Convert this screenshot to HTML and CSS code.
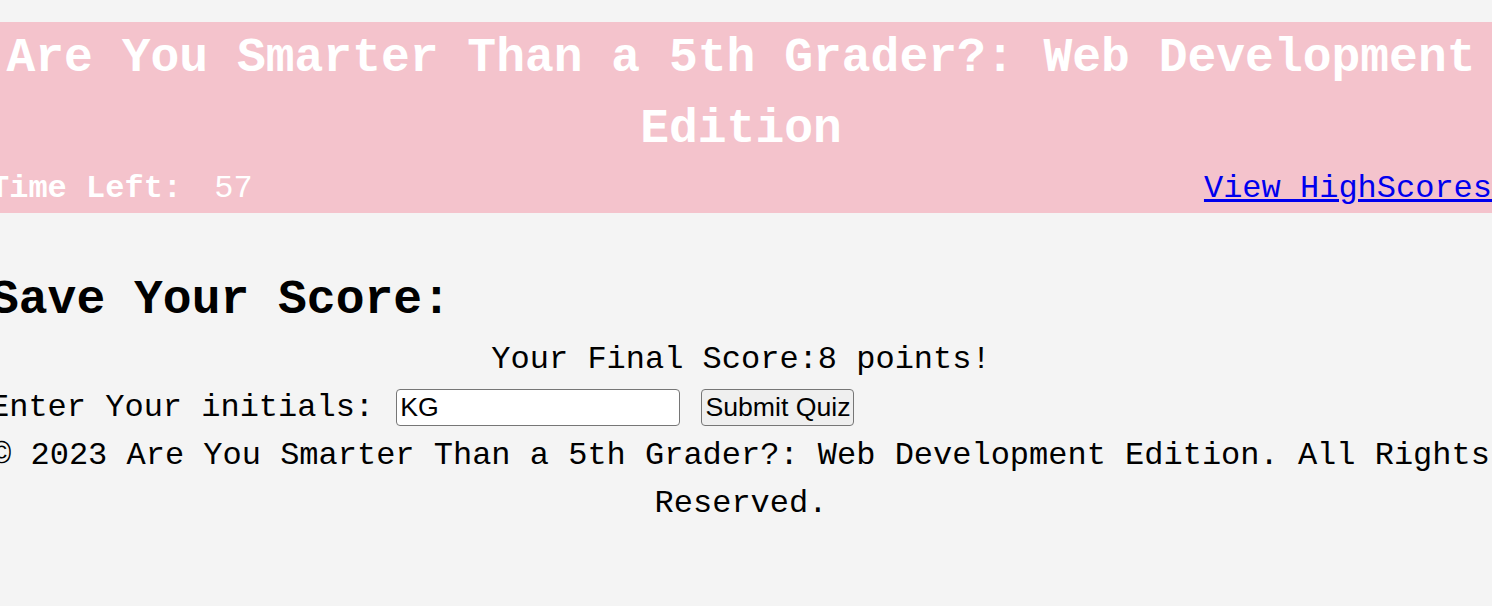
FILE: index.html
```html
<!DOCTYPE html>
<html lang="en">
<head>
<meta charset="utf-8">
<title>Are You Smarter Than a 5th Grader?: Web Development Edition</title>
<link rel="stylesheet" href="styles.css">
</head>
<body>
<div class="page">
  <header class="top">
    <h1 class="title">Are You Smarter Than a 5th Grader?: Web Development Edition</h1>
    <div class="bar">
      <div class="timer"><span class="timer-label">Time Left:</span> <span class="timer-value">57</span></div>
      <a href="#" class="scores-link">View HighScores</a>
    </div>
  </header>
  <main class="result">
    <h2 class="result-title">Save Your Score:</h2>
    <p class="final">Your Final Score:8 points!</p>
    <form class="save-form"><label for="initials">Enter Your initials:</label> <input id="initials" class="initials" type="text" value="KG"> <button type="button" class="submit">Submit Quiz</button></form>
  </main>
  <footer class="foot">© 2023 Are You Smarter Than a 5th Grader?: Web Development Edition. All Rights Reserved.</footer>
</div>
</body>
</html>
```
FILE: styles.css
```css
html, body {
  margin: 0;
  padding: 0;
  background: #f4f4f4;
}
body {
  font-family: "Liberation Mono", "Courier New", monospace;
  font-size: 32px;
  line-height: 48px;
  color: #000;
}
.page {
  margin-left: -10px;
}
.top {
  margin-top: 22px;
  padding-top: 1px;
  background: #f4c3cc;
  color: #fff;
}
.title {
  margin: 0;
  font-size: 48px;
  line-height: 71px;
  font-weight: bold;
  text-align: center;
}
.bar {
  display: flex;
  justify-content: space-between;
  align-items: baseline;
}
.timer-label {
  font-weight: bold;
}
.timer-value {
  margin-left: 13px;
}
.scores-link {
  color: #0000ee;
  text-decoration: underline;
}
.result {
  display: block;
}
.result-title {
  margin: 51px 0 0;
  font-size: 48px;
  line-height: 72px;
  font-weight: bold;
}
.final {
  margin: 0;
  text-align: center;
}
.save-form {
  margin: 0;
  white-space: nowrap;
}
.initials {
  box-sizing: border-box;
  width: 284px;
  height: 37px;
  margin: 0 0 0 3px;
  padding: 1px 3px;
  border: 1px solid #767676;
  border-radius: 4px;
  background: #fff;
  font-family: "Liberation Sans", Arial, sans-serif;
  font-size: 26.67px;
  color: #000;
  vertical-align: middle;
}
.submit {
  box-sizing: border-box;
  width: 153px;
  height: 37px;
  margin: 0 0 0 2px;
  padding: 0;
  border: 1px solid #767676;
  border-radius: 4px;
  background: #efefef;
  font-family: "Liberation Sans", Arial, sans-serif;
  font-size: 26.67px;
  line-height: 1;
  color: #000;
  white-space: nowrap;
  vertical-align: middle;
}
.foot {
  text-align: center;
}
```
